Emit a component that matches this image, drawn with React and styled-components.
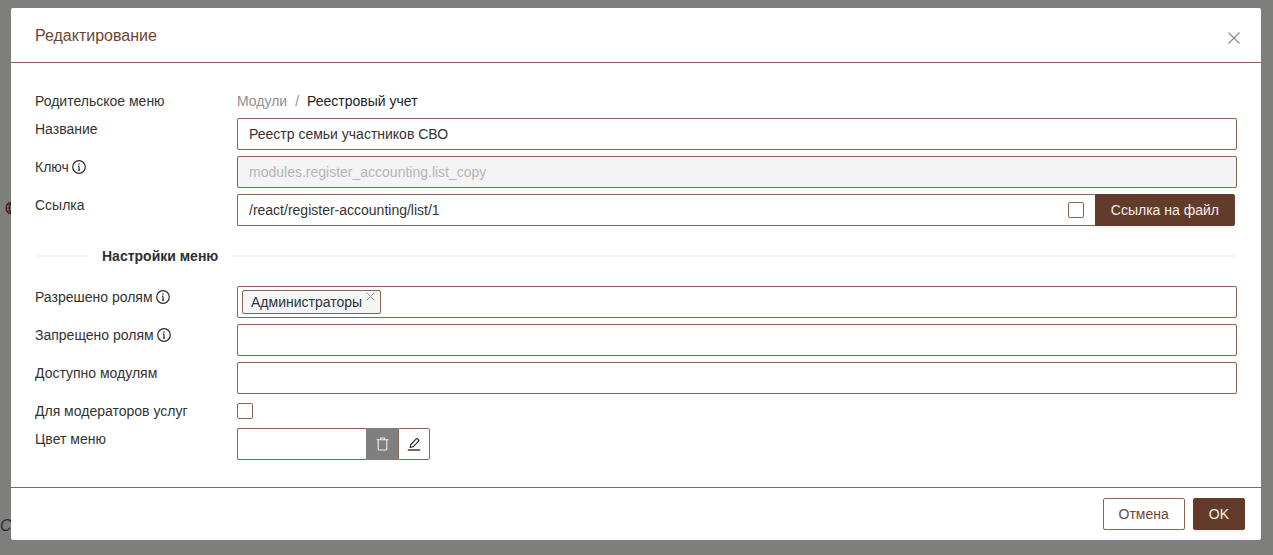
import React from "react";
import styled, { createGlobalStyle } from "styled-components";

const brown = "#633b2a";
const line = "#8a6353";

const GlobalStyle = createGlobalStyle`
  html, body {
    margin: 0;
    padding: 0;
    height: 100%;
    overflow: hidden;
    background: #7e7e7d;
    font-family: "Liberation Sans", Arial, sans-serif;
    font-size: 14px;
    color: #333;
  }
`;

const Page = styled.div`
  height: 555px;
  padding: 8px 12px 0 11px;
  box-sizing: border-box;
  position: relative;
`;

const BehindGlobe = styled.svg`
  position: absolute;
  left: 5px;
  top: 201px;
  width: 14px;
  height: 14px;
`;

const BehindText = styled.span`
  position: absolute;
  left: 0;
  top: 517px;
  font-style: italic;
  font-size: 16px;
  color: #2b2b2b;
`;

const Modal = styled.div`
  position: relative;
  width: 1250px;
  height: 532px;
  background: #fff;
  border-radius: 2px;
  display: flex;
  flex-direction: column;
`;

const Header = styled.div`
  height: 55px;
  box-sizing: border-box;
  padding: 16px 24px 0;
  border-bottom: 1px solid ${line};
  display: flex;
  justify-content: space-between;
  flex-shrink: 0;
`;

const Title = styled.div`
  font-size: 16px;
  line-height: 22px;
  margin-top: 1px;
  color: #6e4636;
`;

const CloseButton = styled.button`
  border: 0;
  background: none;
  padding: 0;
  width: 14px;
  height: 14px;
  margin: 7px -4px 0 0;
  color: #8c8c8c;
  display: flex;
`;

const Body = styled.div`
  flex: 1;
  padding: 27px 24px 27px;
  display: flex;
  flex-direction: column;
  gap: 6px;
`;

const Row = styled.div`
  display: grid;
  grid-template-columns: 202px 1fr;
  min-height: 22px;
`;

const Label = styled.div`
  line-height: 22px;
  display: flex;
  align-items: center;
  gap: 3px;
  height: 22px;
`;

const InfoIcon = styled.svg`
  width: 14px;
  height: 14px;
`;

const Crumbs = styled.div`
  line-height: 22px;
  display: flex;
  color: #222;
`;

const CrumbParent = styled.span`
  color: #8f8f8f;
`;

const CrumbSep = styled.span`
  color: #8f8f8f;
  margin: 0 8px 0 8px;
`;

const Field = styled.input`
  width: 100%;
  height: 32px;
  box-sizing: border-box;
  border: 1px solid ${line};
  border-radius: 2px;
  padding: 0 11px;
  font: inherit;
  color: ${(p) => (p.disabled ? "#b5b5b5" : "#333")};
  background: ${(p) => (p.disabled ? "#f4f4f4" : "#fff")};
  outline: none;
`;

const LinkWrap = styled.div`
  display: flex;
  height: 32px;
  padding-right: 2px;
`;

const LinkBox = styled.div`
  flex: 1;
  height: 32px;
  box-sizing: border-box;
  border: 1px solid ${line};
  border-right: 0;
  border-radius: 2px 0 0 2px;
  display: flex;
  align-items: center;
  padding: 0 11px;
  gap: 8px;
`;

const LinkInput = styled.input`
  flex: 1;
  border: 0;
  padding: 0;
  font: inherit;
  color: #333;
  outline: none;
`;

const Check = styled.span`
  display: block;
  width: 16px;
  height: 16px;
  box-sizing: border-box;
  border: 1px solid ${line};
  border-radius: 2px;
  background: #fff;
`;

const PrimaryButton = styled.button`
  height: 32px;
  padding: 0 15px;
  border: 1px solid ${brown};
  border-radius: ${(p) => (p.$attached ? "0 2px 2px 0" : "2px")};
  background: ${brown};
  color: #f3eeeb;
  font: inherit;
  box-shadow: 0 2px 0 rgba(0, 0, 0, 0.045);
`;

const GhostButton = styled.button`
  height: 32px;
  padding: 0 15px;
  border: 1px solid ${line};
  border-radius: 2px;
  background: #fff;
  color: #6e4636;
  font: inherit;
`;

const Divider = styled.div`
  display: flex;
  align-items: center;
  height: 22px;
  margin: 13px 0 13px;
  font-weight: bold;
  color: #2f2f2f;
  &::before,
  &::after {
    content: "";
    height: 2px;
    background: #f7f5f4;
  }
  &::before {
    width: 54px;
    margin-right: 13px;
  }
  &::after {
    flex: 1;
    margin-left: 14px;
  }
`;

const SelectBox = styled.div`
  height: 32px;
  box-sizing: border-box;
  border: 1px solid ${line};
  border-radius: 2px;
  padding: 3px 4px;
  display: flex;
`;

const Tag = styled.div`
  height: 24px;
  box-sizing: border-box;
  border: 1px solid ${line};
  border-radius: 2px;
  background: #f5f5f5;
  color: #2b3440;
  display: flex;
  line-height: 22px;
  padding: 0 5px 0 8px;
  gap: 4px;
`;

const TagClose = styled.svg`
  width: 9px;
  height: 9px;
  margin-top: 1px;
  color: #9a9a9a;
`;

const ColorGroup = styled.div`
  display: flex;
  width: 193px;
  height: 32px;
`;

const ColorInput = styled.input`
  width: 129px;
  box-sizing: border-box;
  border: 1px solid ${line};
  border-right: 0;
  border-radius: 2px 0 0 2px;
  padding: 0 11px;
  outline: none;
`;

const IconButton = styled.button`
  width: 32px;
  padding: 0;
  display: flex;
  align-items: center;
  justify-content: center;
  border: 1px solid ${(p) => (p.$danger ? "#7f7f7f" : line)};
  border-radius: ${(p) => (p.$danger ? "0" : "0 2px 2px 0")};
  background: ${(p) => (p.$danger ? "#7f7f7f" : "#fff")};
  color: ${(p) => (p.$danger ? "#ececec" : "#1c1c1c")};
  svg {
    width: 14px;
    height: 14px;
  }
`;

const Footer = styled.div`
  height: 53px;
  box-sizing: border-box;
  border-top: 1px solid ${line};
  padding: 10px 16px;
  display: flex;
  justify-content: flex-end;
  gap: 8px;
  flex-shrink: 0;
`;

const Info = () => (
  <InfoIcon viewBox="0 0 14 14" fill="none" stroke="#2b2b2b" strokeWidth="1.2">
    <circle cx="7" cy="7" r="6.3" />
    <path d="M7 6.2v4M5.9 10.2h2.2M6 6.2h1" />
    <circle cx="7" cy="4" r="0.8" fill="#2b2b2b" stroke="none" />
  </InfoIcon>
);

const FieldRow = ({ label, children }) => (
  <Row>
    <Label>{label}</Label>
    {children}
  </Row>
);

export default function App() {
  return (
    <Page>
      <GlobalStyle />
      <BehindGlobe viewBox="0 0 14 14" fill="none" stroke="#3f1f18" strokeWidth="1.2">
        <circle cx="7" cy="7" r="6" />
        <ellipse cx="7" cy="7" rx="2.6" ry="6" />
        <path d="M1 7h12M2 4h10M2 10h10" />
      </BehindGlobe>
      <BehindText>C</BehindText>
      <Modal>
        <Header>
          <Title>Редактирование</Title>
          <CloseButton aria-label="Закрыть">
            <svg width="14" height="14" viewBox="0 0 14 14" fill="none" stroke="currentColor" strokeWidth="1.2">
              <path d="M1.5 1.5l11 11M12.5 1.5l-11 11" />
            </svg>
          </CloseButton>
        </Header>
        <Body>
          <FieldRow label="Родительское меню">
            <Crumbs>
              <CrumbParent>Модули</CrumbParent>
              <CrumbSep>/</CrumbSep>
              <span>Реестровый учет</span>
            </Crumbs>
          </FieldRow>
          <FieldRow label="Название">
            <Field readOnly value="Реестр семьи участников СВО" />
          </FieldRow>
          <FieldRow label={<>Ключ <Info /></>}>
            <Field disabled value="modules.register_accounting.list_copy" />
          </FieldRow>
          <FieldRow label="Ссылка">
            <LinkWrap>
              <LinkBox>
                <LinkInput readOnly value="/react/register-accounting/list/1" />
                <Check />
              </LinkBox>
              <PrimaryButton $attached>Ссылка на файл</PrimaryButton>
            </LinkWrap>
          </FieldRow>
          <Divider>Настройки меню</Divider>
          <FieldRow label={<>Разрешено ролям <Info /></>}>
            <SelectBox>
              <Tag>
                Администраторы
                <TagClose viewBox="0 0 9 9" fill="none" stroke="currentColor" strokeWidth="1">
                  <path d="M.5.5l8 8M8.5.5l-8 8" />
                </TagClose>
              </Tag>
            </SelectBox>
          </FieldRow>
          <FieldRow label={<>Запрещено ролям <Info /></>}>
            <SelectBox />
          </FieldRow>
          <FieldRow label="Доступно модулям">
            <SelectBox />
          </FieldRow>
          <Row>
            <Label>Для модераторов услуг</Label>
            <Label>
              <Check />
            </Label>
          </Row>
          <FieldRow label="Цвет меню">
            <ColorGroup>
              <ColorInput readOnly />
              <IconButton $danger aria-label="Очистить">
                <svg viewBox="0 0 14 14" fill="none" stroke="currentColor" strokeWidth="1.1">
                  <path d="M1.5 2.8h12M5.5 2.8V1h4v1.8" />
                  <path d="M3.2 2.8v9.4l.8.8h7l.8-.8V2.8" />
                </svg>
              </IconButton>
              <IconButton aria-label="Выбрать">
                <svg viewBox="0 0 14 14" fill="none" stroke="currentColor" strokeWidth="1.1">
                  <path d="M3.2 10.3l.5-2.8L9.3 1.9c.4-.4.9-.4 1.3 0l1 1c.4.4.4.9 0 1.3L6 9.8z" />
                  <path d="M.8 13h12.4" strokeWidth="1.3" />
                </svg>
              </IconButton>
            </ColorGroup>
          </FieldRow>
        </Body>
        <Footer>
          <GhostButton>Отмена</GhostButton>
          <PrimaryButton>OK</PrimaryButton>
        </Footer>
      </Modal>
    </Page>
  );
}
